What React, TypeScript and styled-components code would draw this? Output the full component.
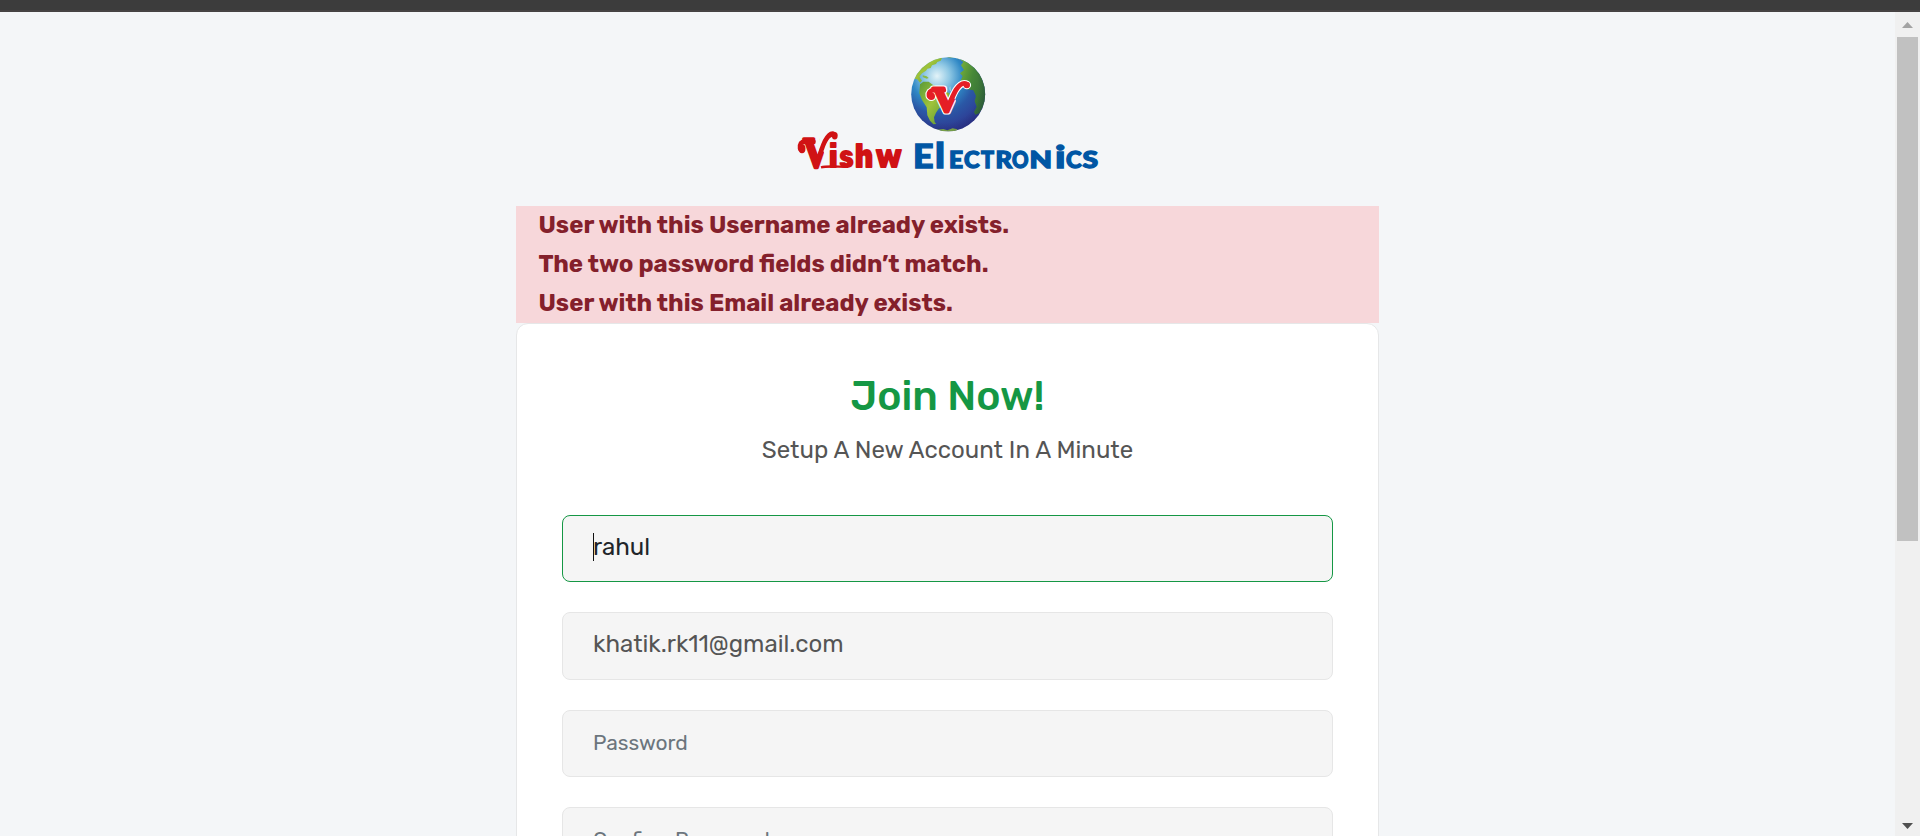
import React from 'react';
import styled, { createGlobalStyle } from 'styled-components';

const Global = createGlobalStyle`
  *, *::before, *::after { box-sizing: border-box; }
  html, body { margin: 0; height: 836px; overflow: hidden; }
  body { background: #f4f6f8; font-family: Rubik, Roboto, sans-serif; color: #555; }
`;

const Shell = styled.div`
  display: flex;
  flex-direction: column;
  height: 836px;
  overflow: hidden;
`;

const TopStrip = styled.div`
  flex: 0 0 12px;
  background: #3c3c3c;
  border-bottom: 2px solid #464344;
`;

const Viewport = styled.div`
  flex: 1;
  min-height: 0;
  display: flex;
`;

const Page = styled.main`
  flex: 1;
  min-width: 0;
  overflow: hidden;
  display: flex;
  flex-direction: column;
  align-items: center;
  padding-top: 44px;
`;

const Logo = styled.svg`
  flex: none;
  display: block;
  width: 303px;
  height: 114px;
  margin-bottom: 36px;
  overflow: visible;
`;

const Column = styled.div`
  flex: none;
  width: 863px;
`;

const ErrorList = styled.ul`
  margin: 0;
  padding: 0 23px 0 22.5px;
  height: 117px;
  list-style: none;
  background: #f7d7da;
  color: #84202b;
`;

const ErrorItem = styled.li`
  height: 39px;
  line-height: 39px;
  font-size: 24px;
  font-weight: 700;
  white-space: nowrap;
`;

const Card = styled.section`
  height: 900px;
  padding: 45px 45px 0;
  background: #fff;
  border: 1px solid #e6e7e8;
  border-radius: 12px;
`;

const Title = styled.h1`
  margin: 0;
  height: 54px;
  line-height: 54px;
  text-align: center;
  font-size: 41px;
  font-weight: 500;
  color: #159744;
`;

const Subtitle = styled.p`
  margin: 7px 0 0;
  height: 40px;
  line-height: 40px;
  text-align: center;
  font-size: 24px;
  color: #555;
`;

const Form = styled.form`
  display: flex;
  flex-direction: column;
  gap: 30px;
  margin-top: 45px;
`;

const Field = styled.div<{ $active?: boolean }>`
  display: flex;
  align-items: center;
  height: 67.3px;
  padding: 0 30px 4px;
  background: #f5f5f5;
  border: 1px solid ${(p) => (p.$active ? '#159744' : '#e6e6e6')};
  border-radius: 8px;
  color: ${(p) => (p.$active ? '#212529' : '#555')};
`;

const Caret = styled.span`
  width: 1px;
  height: 28px;
  margin-right: -1px;
  background: #111;
`;

const Value = styled.span`
  font-size: 24px;
`;

const Placeholder = styled.span`
  padding-top: 2.4px;
  font-size: 21px;
  color: #6c757d;
`;

const Scrollbar = styled.div`
  flex: 0 0 25px;
  display: flex;
  flex-direction: column;
  justify-content: space-between;
  align-items: center;
  padding: 10px 0 7px 0;
  background: #f0f0f0;
`;

const Thumb = styled.div`
  width: 21px;
  height: 504px;
  margin-top: 9px;
  margin-bottom: auto;
  background: #c1c1c1;
`;

type Letter = [char: string, x: number, width: number, size: number];

const vishw: Letter[] = [
  ['i', 32.5, 9.5, 33],
  ['s', 43, 15, 34],
  ['h', 58.5, 19, 35],
  ['w', 79, 27.5, 35],
];

const electronics: Letter[] = [
  ['E', 117, 20.5, 32.5],
  ['l', 139, 10, 33.5],
  ['E', 153, 14, 22],
  ['C', 168, 15.5, 22],
  ['T', 185, 13, 22],
  ['R', 199.5, 16.5, 22],
  ['O', 216, 16.5, 22],
  ['N', 233.5, 22.5, 22],
  ['i', 259, 10.5, 31],
  ['C', 270, 15.5, 22],
  ['S', 286.5, 15.5, 22],
];

function Letters({
  items,
  color,
  family,
  weight = 0,
}: {
  items: Letter[];
  color: string;
  family: string;
  weight?: number;
}) {
  return (
    <g fill={color} stroke={color} strokeWidth={weight} fontFamily={family} fontWeight={900}>
      {items.map(([char, x, width, size], i) => (
        <text
          key={i}
          x={x}
          y={112.3 - weight / 2}
          fontSize={size}
          textLength={width}
          lengthAdjust="spacingAndGlyphs"
        >
          {char}
        </text>
      ))}
    </g>
  );
}

function SwashV({ color, outline = 0, transform }: { color: string; outline?: number; transform: string }) {
  return (
    <g transform={transform} strokeLinecap="round" strokeLinejoin="round">
      <g clipPath="url(#stem)">
        <text
          x="6.6"
          y="31.6"
          fontFamily="Liberation Serif, serif"
          fontWeight="700"
          fontSize="35.6"
          textLength="28"
          lengthAdjust="spacingAndGlyphs"
          fill={color}
          stroke={color}
          strokeWidth={3 + outline * 2}
        >
          V
        </text>
      </g>
      <path d="M18 9.8H8C4 9.8 2.3 12 2.8 15.5" fill="none" stroke={color} strokeWidth={4.4 + outline * 2} />
      <circle cx="5.2" cy="15.8" r={3.8 + outline} fill={color} />
      <path
        d="M19.5 29.5C24.5 23.5 26.5 15 30 9.5C33 5 36.5 2.5 39.5 3.2"
        fill="none"
        stroke={color}
        strokeWidth={4.8 + outline * 2}
      />
      <circle cx="40.8" cy="4.6" r={3.2 + outline} fill={color} />
    </g>
  );
}

function BrandLogo() {
  return (
    <Logo viewBox="0 0 303 114" role="img" aria-label="Vishw Electronics">
      <defs>
        <radialGradient id="ocean" gradientUnits="userSpaceOnUse" cx="141" cy="20" r="57">
          <stop offset="0" stopColor="#e3f3f8" />
          <stop offset="0.22" stopColor="#8fc8e4" />
          <stop offset="0.45" stopColor="#2f88c5" />
          <stop offset="0.66" stopColor="#2a58a6" />
          <stop offset="1" stopColor="#2f3690" />
        </radialGradient>
        <linearGradient id="land" x1="0" y1="0" x2="1" y2="1">
          <stop offset="0" stopColor="#5a9a38" />
          <stop offset="0.45" stopColor="#9fc33a" />
          <stop offset="1" stopColor="#4f8f37" />
        </linearGradient>
        <linearGradient id="africa" x1="0" y1="0" x2="1" y2="0.6">
          <stop offset="0" stopColor="#7fb53b" />
          <stop offset="0.5" stopColor="#468838" />
          <stop offset="1" stopColor="#356c36" />
        </linearGradient>
        <radialGradient id="shade" cx="0.45" cy="0.42" r="0.62">
          <stop offset="0.75" stopColor="#102050" stopOpacity="0" />
          <stop offset="1" stopColor="#102050" stopOpacity="0.28" />
        </radialGradient>
        <clipPath id="disc">
          <circle cx="152.2" cy="38.2" r="37" />
        </clipPath>
        <clipPath id="stem">
          <path d="M0 -5H23L25 14L30 20V40H0Z" />
        </clipPath>
      </defs>
      <circle cx="152.2" cy="38.2" r="37" fill="url(#ocean)" />
      <g clipPath="url(#disc)">
        <g transform="translate(104 -6) scale(0.33333)">
          <path
            d="M40 85L52 88L60 98L66 92L58 80L66 70L78 62L82 56L92 54L96 46L108 42L112 36L122 32L126 24L115 16L70 28L42 60Z"
            fill="url(#land)"
          />
          <path d="M68 76L80 79L86 84L80 86L68 81Z" fill="#8aba45" />
          <path
            d="M60 103L70 95L86 95L98 104L112 110L128 122L149 130L146 142L136 152L130 166L116 176L108 188L102 202L104 216L109 222L100 223L90 212L82 196L80 172L66 150L58 130Z"
            fill="url(#land)"
          />
          <path
            d="M183 46L190 36L178 26L205 32L240 68L257 115L255 160L238 190L226 194L222 186L230 170L224 154L228 138L220 121L202 118L190 106L182 92L188 78L180 70L192 60Z"
            fill="url(#africa)"
          />
          <path d="M110 239L130 237L142 241L158 235L172 238L168 250H115Z" fill="#8ebc45" />
          <path d="M132 18L150 24L166 21L176 28L184 24L170 14Z" fill="#5f9c40" />
        </g>
        <circle cx="152.2" cy="38.2" r="37" fill="url(#shade)" />
      </g>
      <SwashV color="#fff" outline={1.1} transform="translate(130 24.4)" />
      <SwashV color="#e51e26" transform="translate(130 24.4)" />
      <SwashV color="#d01214" transform="translate(1.2 74.4) scale(0.92 1.16)" />
      <Letters items={vishw} color="#d01214" family="Rubik, sans-serif" />
      <path d="M25 111.3C31 109.6 42 110.8 52 110.8" fill="none" stroke="#d01214" strokeWidth="2.4" />
      <Letters items={electronics} color="#0056a4" family="Lato, sans-serif" weight={1.3} />
    </Logo>
  );
}

export default function App() {
  return (
    <>
      <Global />
      <Shell>
        <TopStrip />
        <Viewport>
          <Page>
            <BrandLogo />
            <Column>
              <ErrorList>
                <ErrorItem>User with this Username already exists.</ErrorItem>
                <ErrorItem>The two password fields didn’t match.</ErrorItem>
                <ErrorItem>User with this Email already exists.</ErrorItem>
              </ErrorList>
              <Card>
                <Title>Join Now!</Title>
                <Subtitle>Setup A New Account In A Minute</Subtitle>
                <Form>
                  <Field $active><Caret /><Value>rahul</Value></Field>
                  <Field><Value>khatik.rk11@gmail.com</Value></Field>
                  <Field><Placeholder>Password</Placeholder></Field>
                  <Field><Placeholder>Confirm Password</Placeholder></Field>
                </Form>
              </Card>
            </Column>
          </Page>
          <Scrollbar>
            <svg width="11" height="6" viewBox="0 0 11 6"><path d="M0 6 5.5 0 11 6Z" fill="#a3a3a3" /></svg>
            <Thumb />
            <svg width="11" height="6" viewBox="0 0 11 6"><path d="M0 0H11L5.5 6Z" fill="#505050" /></svg>
          </Scrollbar>
        </Viewport>
      </Shell>
    </>
  );
}
